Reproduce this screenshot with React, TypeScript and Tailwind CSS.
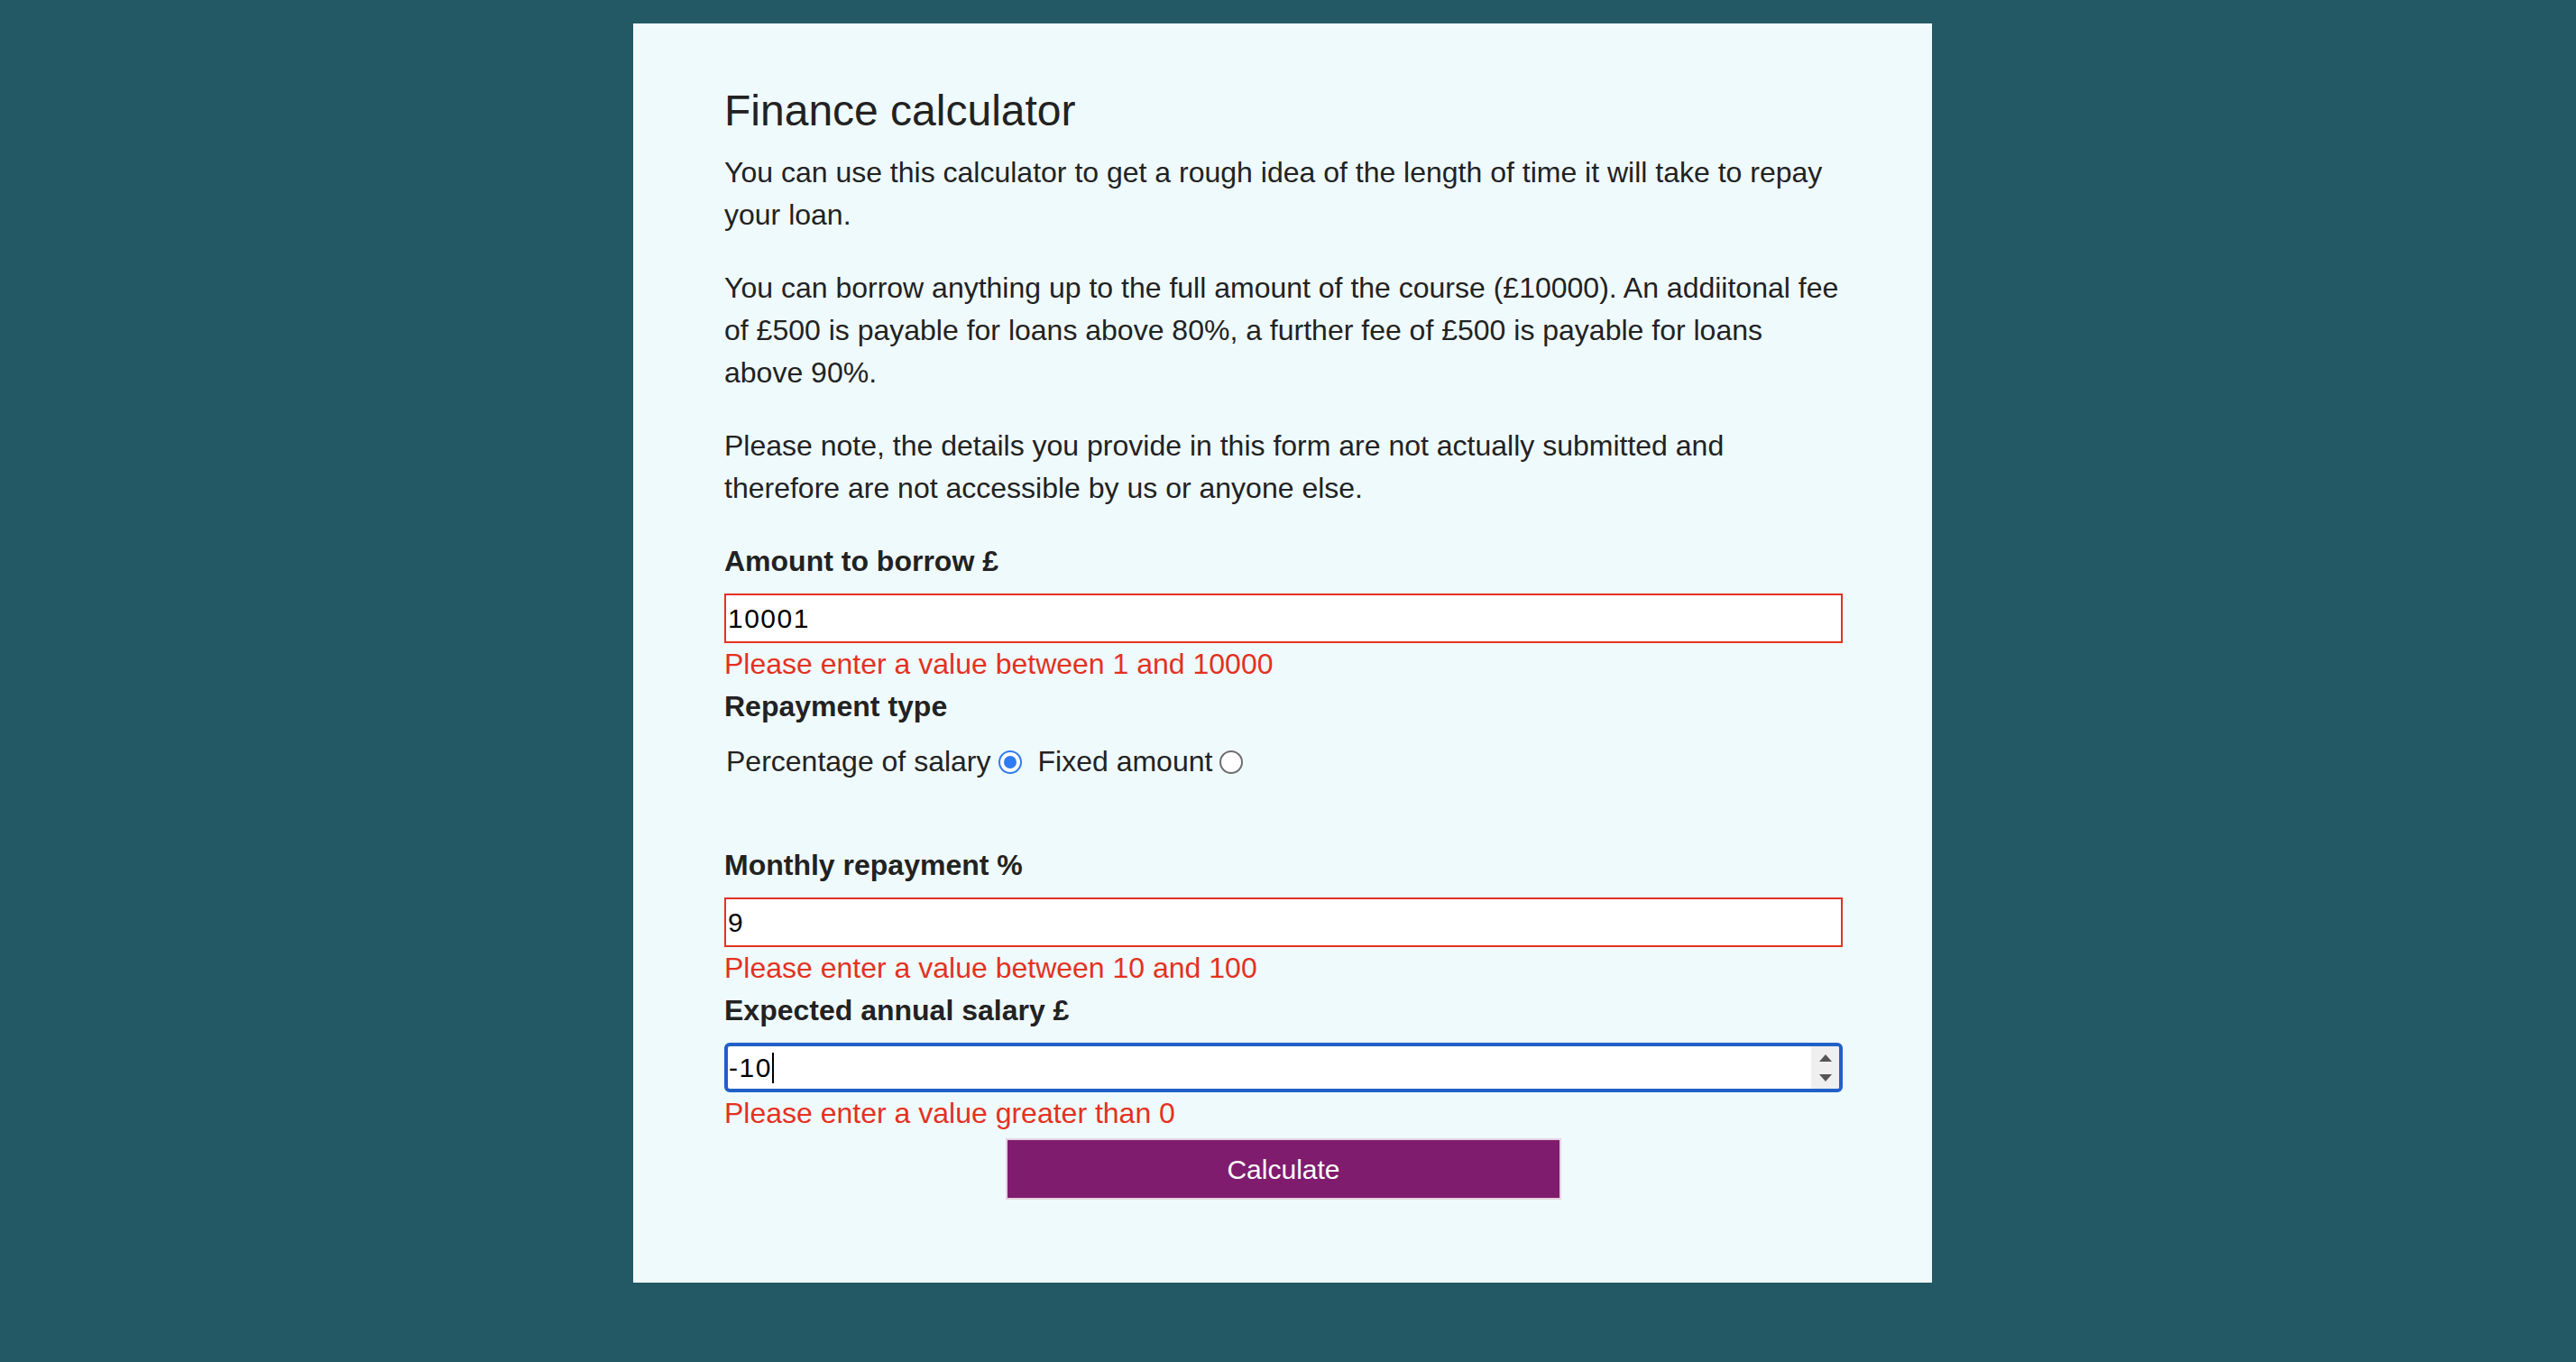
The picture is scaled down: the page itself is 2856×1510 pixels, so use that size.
import React from "react";

const red = "border-[#e4311f]";

function Label({ children, className = "" }: { children: React.ReactNode; className?: string }) {
  return <div className={"font-bold mb-[12px] " + className}>{children}</div>;
}

function ErrorText({ children }: { children: React.ReactNode }) {
  return <div className="text-[#e4311f]">{children}</div>;
}

function BadInput({ value }: { value: string }) {
  return (
    <div className={"h-[55px] border-2 bg-white flex items-center pl-[2px] " + red}>
      <span className="text-black text-[30px] tracking-[1.5px]">{value}</span>
    </div>
  );
}

function FocusedNumberInput({ value }: { value: string }) {
  return (
    <div className="h-[55px] border-[4px] border-[#2060c8] rounded-[6px] bg-white flex items-stretch overflow-hidden">
      <div className="flex-1 flex items-center pl-[1px]">
        <span className="text-black text-[30px] tracking-[1.5px]">{value}</span>
        <span className="w-[2px] h-[34px] bg-black" />
      </div>
      <div className="w-[31px] bg-[#efefef] flex flex-col items-center justify-center gap-[14px]">
        <svg width="14" height="8" viewBox="0 0 14 8">
          <polygon points="7,0 14,8 0,8" fill="#555" />
        </svg>
        <svg width="14" height="8" viewBox="0 0 14 8">
          <polygon points="0,0 14,0 7,8" fill="#555" />
        </svg>
      </div>
    </div>
  );
}

function Radio({ checked }: { checked?: boolean }) {
  if (checked) {
    return (
      <span className="w-[26px] h-[26px] rounded-full border-[2.5px] border-[#2f7bf5] bg-white flex items-center justify-center">
        <span className="block w-[14px] h-[14px] rounded-full bg-[#2f7bf5]" />
      </span>
    );
  }
  return <span className="block w-[26px] h-[26px] rounded-full border-2 border-[#6e6e6e] bg-white" />;
}

export default function App() {
  return (
    <div className="min-h-screen bg-[#235865] pt-[26px] pl-[702px] font-['Liberation_Sans',Arial,sans-serif]">
      <div className="w-[1440px] bg-[#effafc] pl-[101px] pr-[99px] pt-[69px] pb-[92px] text-[32px] leading-[47px] text-[#222]">
        <h1 className="text-[48px] leading-[56px] font-normal mb-[17px]">Finance calculator</h1>
        <p className="mb-[34px]">
          You can use this calculator to get a rough idea of the length of time it will take to repay your loan.
        </p>
        <p className="mb-[34px]">
          You can borrow anything up to the full amount of the course (£10000). An addiitonal fee of £500 is payable
          for loans above 80%, a further fee of £500 is payable for loans above 90%.
        </p>
        <p className="mb-[34px]">
          Please note, the details you provide in this form are not actually submitted and therefore are not
          accessible by us or anyone else.
        </p>

        <Label>Amount to borrow £</Label>
        <BadInput value="10001" />
        <ErrorText>Please enter a value between 1 and 10000</ErrorText>

        <Label className="mb-[14px]">Repayment type</Label>
        <div className="flex items-center mb-[68px] pl-[2px]">
          <span>Percentage of salary</span>
          <span className="ml-[8px] mr-[18px]">
            <Radio checked />
          </span>
          <span>Fixed amount</span>
          <span className="ml-[8px]">
            <Radio />
          </span>
        </div>

        <Label>Monthly repayment %</Label>
        <BadInput value="9" />
        <ErrorText>Please enter a value between 10 and 100</ErrorText>

        <Label>Expected annual salary £</Label>
        <FocusedNumberInput value="-10" />
        <ErrorText>Please enter a value greater than 0</ErrorText>

        <div className="flex justify-center mt-[4px]">
          <button className="w-[616px] h-[68px] bg-[#801c6e] text-white border-2 border-white/80 text-[30px]">
            Calculate
          </button>
        </div>
      </div>
    </div>
  );
}
